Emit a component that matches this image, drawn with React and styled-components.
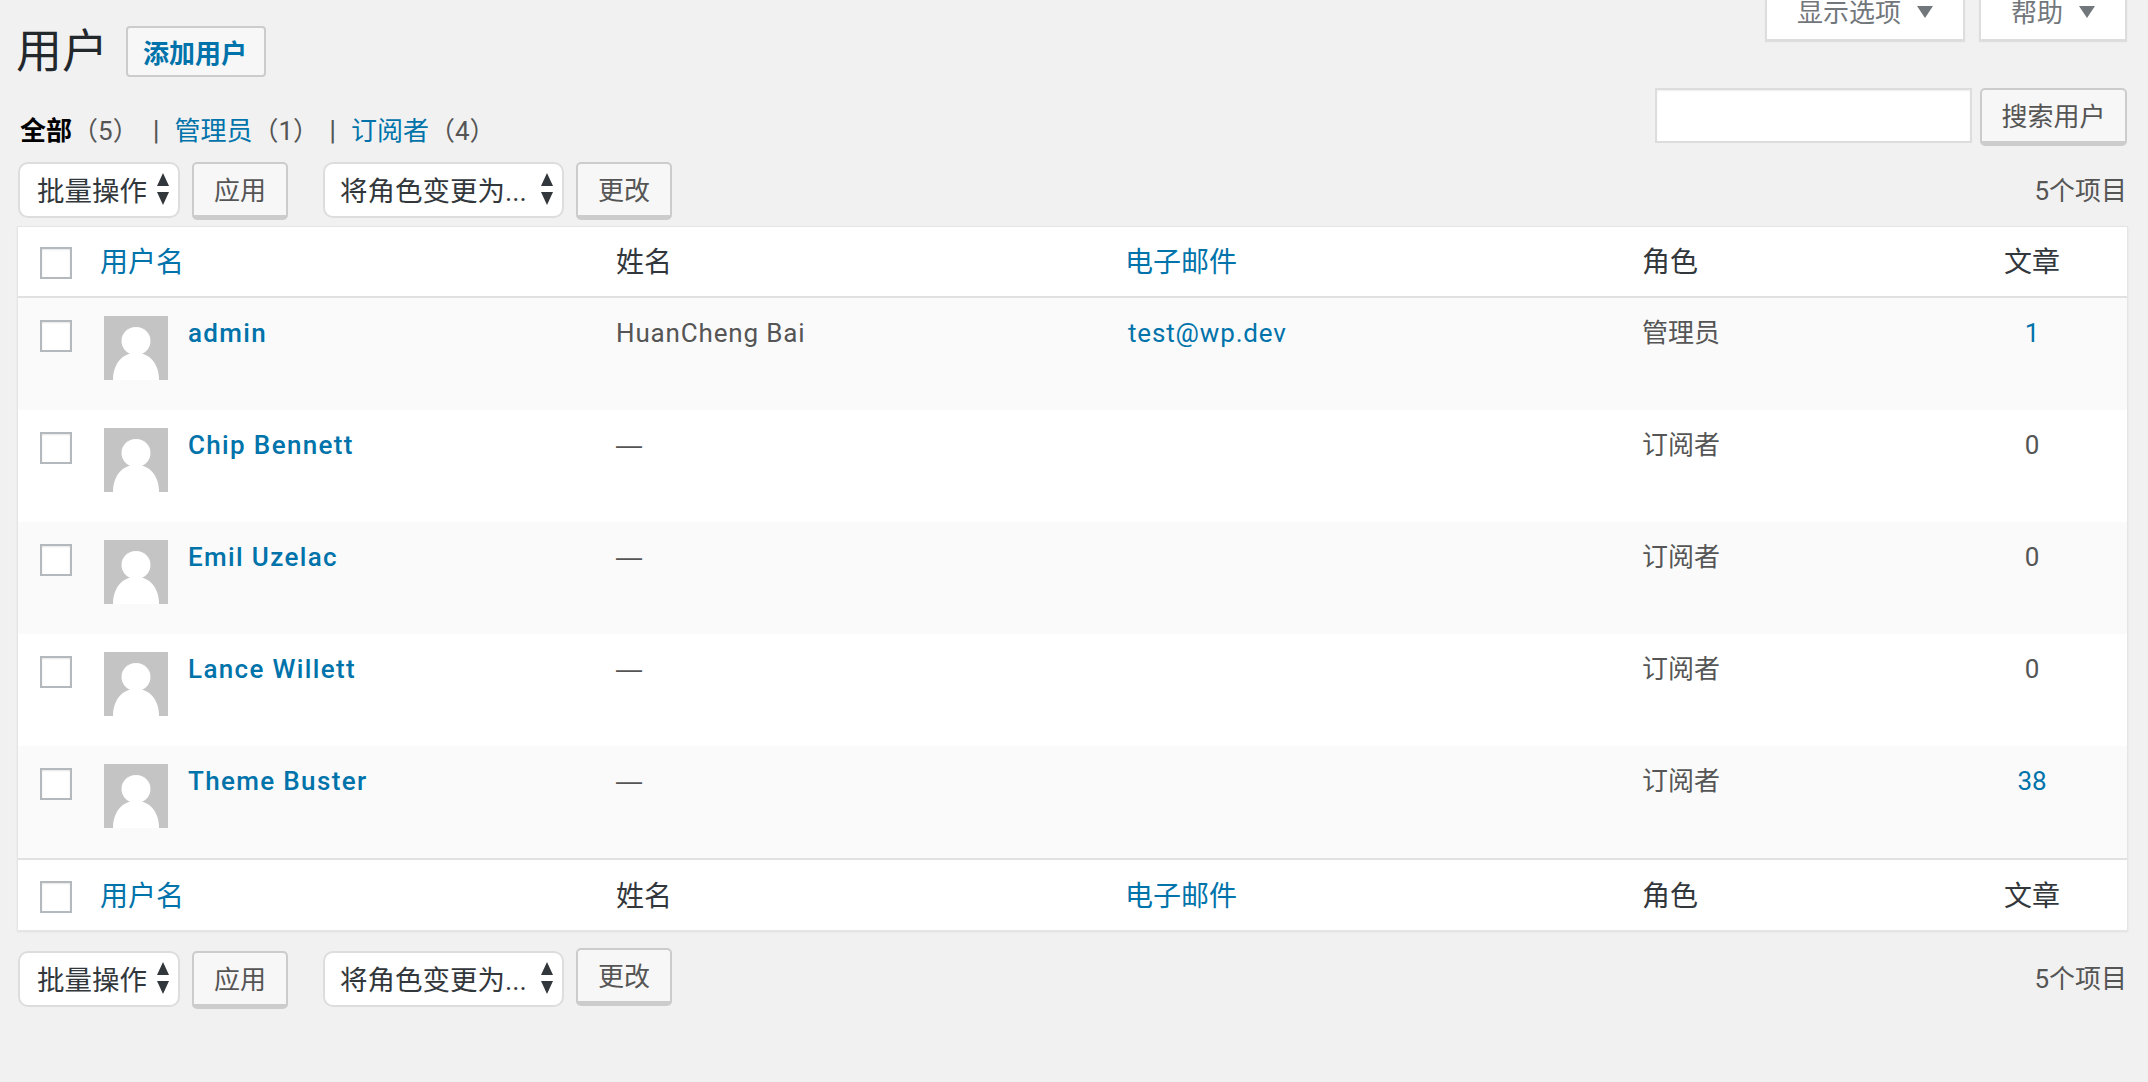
import * as React from "react"
import styled, { createGlobalStyle } from "styled-components"

const users = [
  { name: "admin", fullName: "HuanCheng Bai", email: "test@wp.dev", role: "管理员", posts: "1" },
  { name: "Chip Bennett", role: "订阅者", posts: "0" },
  { name: "Emil Uzelac", role: "订阅者", posts: "0" },
  { name: "Lance Willett", role: "订阅者", posts: "0" },
  { name: "Theme Buster", role: "订阅者", posts: "38" },
]

const GlobalStyle = createGlobalStyle`
  html, body {
    margin: 0;
    background: #f1f1f1;
  }
  body {
    font-family: Roboto, "Noto Sans CJK SC", sans-serif;
    font-size: 26px;
    color: #444;
  }
  * {
    box-sizing: border-box;
  }
`

const Page = styled.div`
  height: 1082px;
  overflow: hidden;
  padding: 0 21px 0 18px;
`

const Top = styled.div`
  display: flex;
  justify-content: space-between;
  height: 162px;
`

const TitleRow = styled.div`
  display: flex;
  align-items: center;
  gap: 18px;
  height: 51px;
  margin: 26px 0 0 -2px;
`

const Title = styled.h1`
  margin: 0;
  font-size: 46px;
  font-weight: 400;
  line-height: 51px;
  color: #23282d;
`

const AddButton = styled.a`
  display: flex;
  align-items: center;
  justify-content: center;
  width: 140px;
  height: 51px;
  padding-right: 2px;
  background: #f7f7f7;
  border: 2px solid #ccc;
  border-radius: 4px;
  color: #0073aa;
  font-size: 26px;
  font-weight: 700;
`

const Filters = styled.ul`
  display: flex;
  list-style: none;
  margin: 36px 0 0 2px;
  padding: 0;
  line-height: 36px;
  color: #555;
`

const Filter = styled.li`
  margin-right: ${props => props.$gap}px;

  &:not(:first-child)::before {
    content: "|";
    margin-right: 15px;
    font-size: 28px;
    color: #555;
  }
`

const FilterLabel = styled.span`
  color: ${props => (props.$current ? "#000" : "#0073aa")};
  font-weight: ${props => (props.$current ? 700 : 400)};
`

const RightSide = styled.div`
  display: flex;
  flex-direction: column;
  align-items: flex-end;
`

const Tabs = styled.div`
  display: flex;
  gap: 14px;
`

const Tab = styled.div`
  display: flex;
  align-items: flex-end;
  justify-content: center;
  gap: 16px;
  width: ${props => props.$width}px;
  height: 41px;
  overflow: hidden;
  padding-bottom: 8px;
  background: #fff;
  border: 2px solid #ddd;
  border-top: 0;
  box-shadow: 0 1px 1px rgba(0, 0, 0, 0.08);
  line-height: 36px;
  color: #72777c;
`

const TabArrow = styled.span`
  width: 0;
  height: 0;
  margin-bottom: 13px;
  border-left: 8px solid transparent;
  border-right: 8px solid transparent;
  border-top: 12px solid #72777c;
`

const SearchForm = styled.div`
  display: flex;
  gap: 8px;
  margin-top: 47px;
`

const SearchInput = styled.input`
  width: 317px;
  height: 55px;
  background: #fff;
  border: 2px solid #ddd;
  box-shadow: inset 0 1px 2px rgba(0, 0, 0, 0.07);
  outline: none;
`

const Button = styled.button`
  width: ${props => props.$width}px;
  height: 58px;
  margin-top: ${props => props.$offset || 0}px;
  padding: 0 0 3px;
  background: #f7f7f7;
  border: 2px solid #ccc;
  border-bottom-width: 5px;
  border-radius: 5px;
  font-family: inherit;
  font-size: 26px;
  color: #555;
`

const Toolbar = styled.div`
  display: flex;
  align-items: flex-start;
  height: 58px;
`

const Select = styled.div`
  display: flex;
  align-items: center;
  justify-content: space-between;
  width: ${props => props.$width}px;
  height: 56px;
  margin: ${props => props.$offset || 0}px 12px 0 0;
  padding: 0 8px 2px ${props => props.$inset}px;
  background: #fff;
  border: 2px solid #ddd;
  border-radius: 10px;
  font-size: 27.5px;
  color: #32373c;
  white-space: nowrap;
`

const SelectArrows = styled.svg`
  flex: none;
  width: 14px;
  height: 36px;
  fill: #32373c;
`

const Count = styled.div`
  margin: ${props => props.$offset || 0}px 0 0 auto;
  line-height: 58px;
  color: #555;
`

const ToolbarGap = styled.div`
  width: 35px;
`

const Table = styled.div`
  margin: 6px -1px 17px -1px;
  background: #fff;
  border: 1px solid #e5e5e5;
  box-shadow: 0 1px 2px rgba(0, 0, 0, 0.07);
`

const columns = "82px 516px 509px 517px 295px 1fr"

const HeadRow = styled.div`
  display: grid;
  grid-template-columns: ${columns};
  align-items: center;
  height: ${props => (props.$foot ? 72 : 71)}px;
  padding-top: ${props => (props.$foot ? 3 : 2)}px;
  border-${props => (props.$foot ? "top" : "bottom")}: 2px solid #e1e1e1;
  line-height: 36px;
  font-size: 28px;
  color: #32373c;
`

const HeadLink = styled.a`
  color: #0073aa;
`

const HeadPosts = styled.span`
  text-align: center;
`

const CheckCell = styled.div`
  padding-left: 22px;
`

const Checkbox = styled.span`
  display: block;
  width: 32px;
  height: 32px;
  background: #fff;
  border: 2px solid #b4b9be;
  box-shadow: inset 0 1px 2px rgba(0, 0, 0, 0.1);
`

const Row = styled.div`
  display: grid;
  grid-template-columns: ${columns};
  height: 112px;
  background: ${props => (props.$alt ? "#fafafa" : "#fff")};
  line-height: 36px;
  color: #555;
`

const RowCheck = styled(CheckCell)`
  padding-top: 22px;
`

const UserCell = styled.div`
  display: flex;
  gap: 20px;
  padding: 18px 0 0 4px;
`

const Avatar = styled.svg`
  flex: none;
  width: 64px;
  height: 64px;
  background: #c4c4c4;
  fill: #fff;
`

const UserName = styled.a`
  color: #0073aa;
  font-weight: 500;
  letter-spacing: 1.35px;
  margin-top: -1px;
`

const Cell = styled.div`
  padding-top: 17px;
`

const NameCell = styled(Cell)`
  letter-spacing: 0.85px;
`

const EmptyName = styled(Cell)`
  font-family: "Liberation Sans", sans-serif;
`

const EmailCell = styled(Cell)`
  padding-left: 3px;
  letter-spacing: 0.85px;
  color: #0073aa;
`

const PostsCell = styled(Cell)`
  text-align: center;
  color: ${props => (props.$linked ? "#0073aa" : "#555")};
`

const TableHead = ({ foot }) => (
  <HeadRow $foot={foot}>
    <CheckCell>
      <Checkbox />
    </CheckCell>
    <HeadLink>用户名</HeadLink>
    <span>姓名</span>
    <HeadLink>电子邮件</HeadLink>
    <span>角色</span>
    <HeadPosts>文章</HeadPosts>
  </HeadRow>
)

const Arrows = () => (
  <SelectArrows viewBox="0 0 14 36">
    <path d="M7 2 L13 15 H1 Z" />
    <path d="M7 34 L13 21 H1 Z" />
  </SelectArrows>
)

const TableNav = ({ bottom }) => (
  <Toolbar>
    <Select $width={162} $inset={17} $offset={bottom ? 3 : 0}>
      批量操作
      <Arrows />
    </Select>
    <Button $width={96} $offset={bottom ? 3 : 0}>
      应用
    </Button>
    <ToolbarGap />
    <Select $width={241} $inset={15} $offset={bottom ? 3 : 0}>
      将角色变更为...
      <Arrows />
    </Select>
    <Button $width={96}>更改</Button>
    <Count $offset={bottom ? 2 : 0}>5个项目</Count>
  </Toolbar>
)

const App = () => (
  <Page>
    <GlobalStyle />
    <Top>
      <div>
        <TitleRow>
          <Title>用户</Title>
          <AddButton>添加用户</AddButton>
        </TitleRow>
        <Filters>
          <Filter $gap={14}>
            <FilterLabel $current>全部</FilterLabel>（5）
          </Filter>
          <Filter $gap={10}>
            <FilterLabel>管理员</FilterLabel>（1）
          </Filter>
          <Filter $gap={0}>
            <FilterLabel>订阅者</FilterLabel>（4）
          </Filter>
        </Filters>
      </div>
      <RightSide>
        <Tabs>
          <Tab $width={200}>
            显示选项
            <TabArrow />
          </Tab>
          <Tab $width={148}>
            帮助
            <TabArrow />
          </Tab>
        </Tabs>
        <SearchForm>
          <SearchInput />
          <Button $width={147}>搜索用户</Button>
        </SearchForm>
      </RightSide>
    </Top>
    <TableNav />
    <Table>
      <TableHead />
      {users.map((user, i) => (
        <Row key={user.name} $alt={i % 2 === 0}>
          <RowCheck>
            <Checkbox />
          </RowCheck>
          <UserCell>
            <Avatar viewBox="0 0 64 64">
              <ellipse cx="32" cy="25" rx="14.5" ry="14" />
              <path d="M9 64 C9 48 18 37 32 37 C46 37 55 48 55 64 Z" />
            </Avatar>
            <UserName>{user.name}</UserName>
          </UserCell>
          {user.fullName ? <NameCell>{user.fullName}</NameCell> : <EmptyName>—</EmptyName>}
          <EmailCell>{user.email}</EmailCell>
          <Cell>{user.role}</Cell>
          <PostsCell $linked={user.posts !== "0"}>{user.posts}</PostsCell>
        </Row>
      ))}
      <TableHead foot />
    </Table>
    <TableNav bottom />
  </Page>
)

export default App
